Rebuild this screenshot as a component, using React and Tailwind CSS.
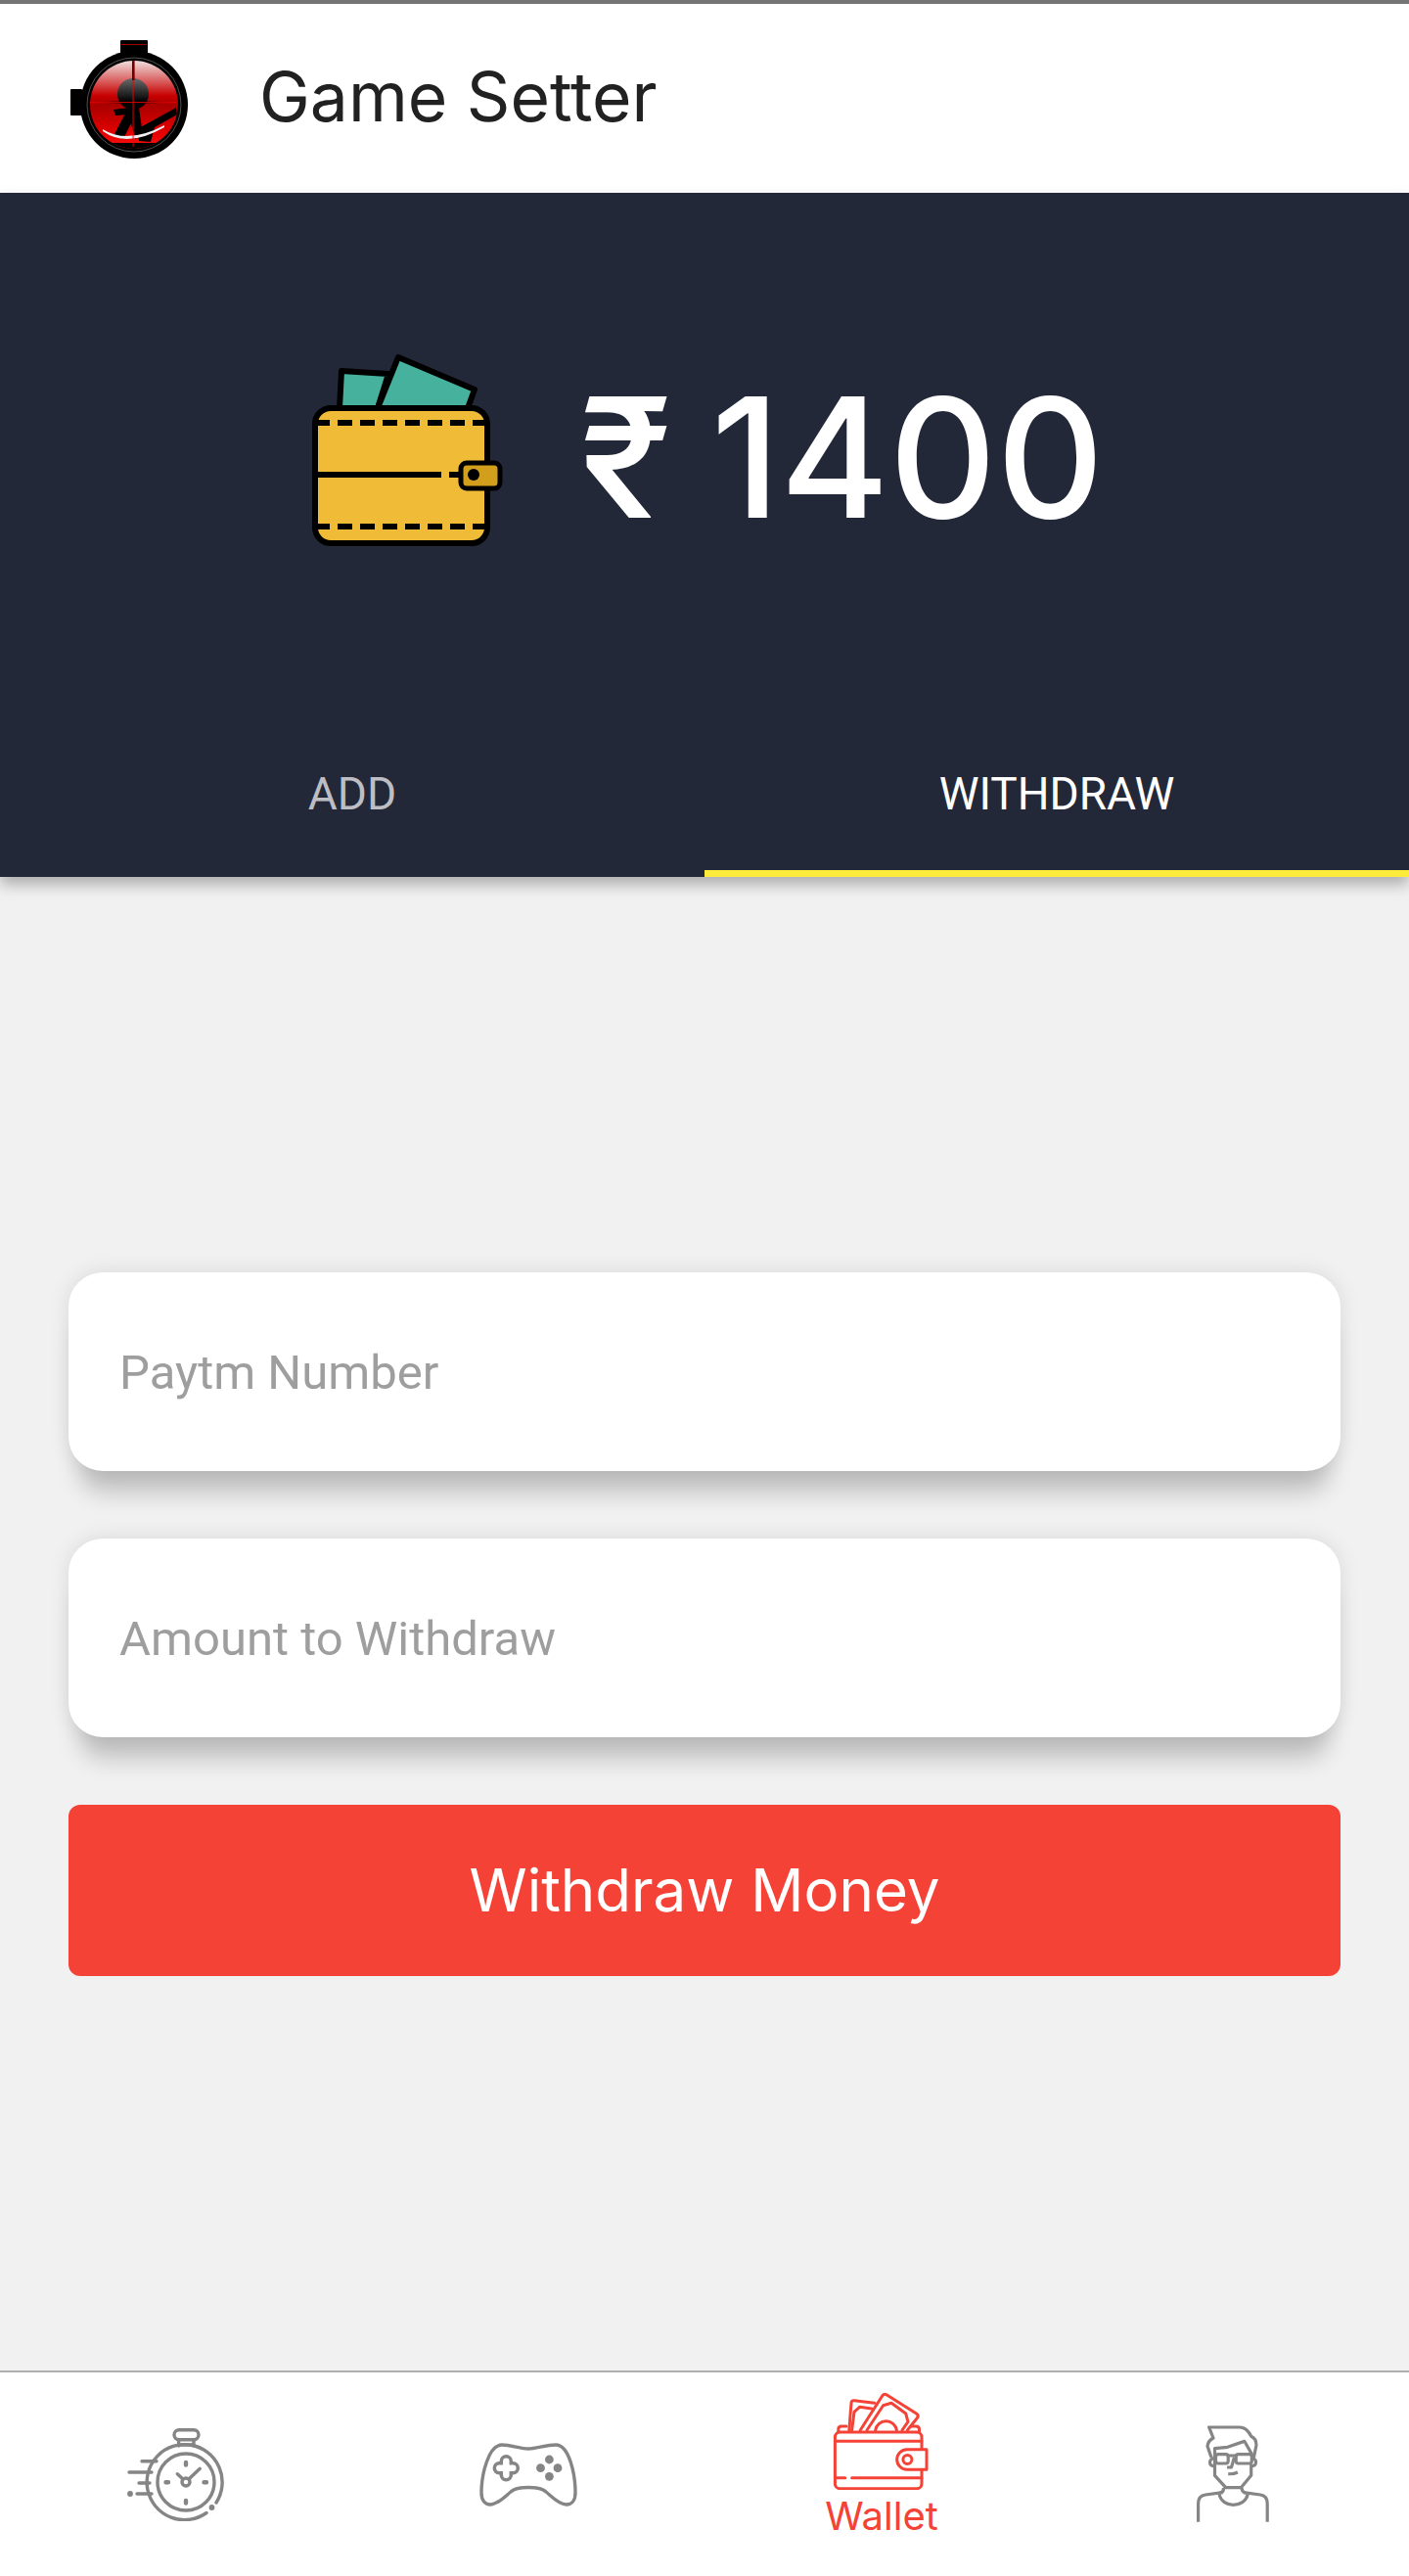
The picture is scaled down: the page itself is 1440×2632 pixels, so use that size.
import { useState } from "react";

function SniperLogo() {
  return (
    <svg viewBox="22 20 124 124" className="w-[124px] h-[124px] shrink-0 mt-[3px]">
      <defs>
        <linearGradient id="glass" x1="0" y1="0" x2="0" y2="1">
          <stop offset="0" stopColor="#f0dede" />
          <stop offset="0.2" stopColor="#dc7070" />
          <stop offset="0.4" stopColor="#c80000" />
          <stop offset="0.5" stopColor="#a80000" />
          <stop offset="0.8" stopColor="#e00000" />
          <stop offset="1" stopColor="#ff1010" />
        </linearGradient>
        <linearGradient id="head" x1="0" y1="0" x2="0" y2="1">
          <stop offset="0" stopColor="#6a6a6a" />
          <stop offset="0.75" stopColor="#000" />
        </linearGradient>
        <clipPath id="lens">
          <circle cx="87" cy="87" r="45" />
        </clipPath>
      </defs>
      <rect x="73" y="21" width="28" height="14" rx="1" fill="#000" />
      <rect x="22" y="71" width="12" height="27" rx="1" fill="#000" />
      <rect x="74" y="25" width="26" height="1" fill="#a00000" />
      <circle cx="87" cy="87" r="55" fill="#000" />
      <circle cx="87" cy="87" r="48" fill="none" stroke="#666" strokeWidth="0.8" />
      <circle cx="87" cy="87" r="45" fill="url(#glass)" />
      <g clipPath="url(#lens)">
        <circle cx="86" cy="76" r="16" fill="url(#head)" />
        <path d="M81 90 L92 90 L96 118 L88 122 L84 106 L76 122 L66 119 Z" fill="#000" />
        <path d="M66 92 L82 90 L82 97 L68 98 Z" fill="#000" />
        <path d="M90 112 L130 90 L131 97 L108 110 L104 125 L92 124 Z" fill="#000" />
        <path d="M55 112 Q80 128 118 108 L118 110 Q80 132 55 114 Z" fill="#f0f0f0" />
        <rect x="40" y="126" width="92" height="10" fill="#000" />
        <rect x="85" y="40" width="2.5" height="22" fill="#000" />
        <path d="M42 84.5 L74 83.5 L74 85.5 Z M130 84.5 L98 83.5 L98 85.5 Z" fill="#000" />
        <rect x="85.6" y="40" width="0.9" height="90" fill="#f00000" />
        <rect x="42" y="84.2" width="88" height="0.9" fill="#f00000" />
      </g>
    </svg>
  );
}

function BigWallet() {
  return (
    <svg viewBox="28 20 198 200" className="w-[198px] h-[200px] shrink-0">
      <g stroke="#000" strokeWidth="6" strokeLinejoin="round">
        <path d="M58 78 L60 40 L108 43 L97 78 Z" fill="#46b29d" />
        <path d="M97 78 L118 26 L196 59 L189 78 Z" fill="#46b29d" />
        <rect x="33" y="78" width="176" height="138" rx="16" fill="#f0bb36" />
      </g>
      <g stroke="#000" strokeWidth="6" fill="none">
        <line x1="33" y1="93" x2="209" y2="93" strokeDasharray="15 8" />
        <line x1="33" y1="199" x2="209" y2="199" strokeDasharray="15 8" />
        <line x1="33" y1="146" x2="162" y2="146" />
        <line x1="170" y1="146" x2="182" y2="146" />
      </g>
      <rect x="182" y="134" width="40" height="26" rx="6" fill="#d19f1c" stroke="#000" strokeWidth="5" />
      <circle cx="195" cy="146" r="6" fill="#000" />
    </svg>
  );
}

function StopwatchIcon() {
  return (
    <svg viewBox="0 0 100 95" fill="none" stroke="#858585" strokeWidth="3.4" strokeLinecap="round" className="w-[100px] h-[95px]">
      <rect x="48" y="1.7" width="25" height="10" rx="5" />
      <path d="M52.6 12 V18 M68 12 V18 M52.6 17 H68" />
      <path d="M91 76 A38.5 38.5 0 1 0 81 86.5" />
      <circle cx="86.5" cy="81" r="1.2" fill="#858585" />
      <circle cx="60" cy="55" r="29" />
      <path d="M15 33.7 H30 M2 45 H25 M12 56 H23 M10 67 H25" />
      <circle cx="3" cy="67" r="1.2" fill="#858585" />
      <path d="M60 35 V37.5 M60 74 V76.5 M39.5 55.3 H42 M78.5 55.3 H81" strokeWidth="4.4" />
      <circle cx="60" cy="55" r="4" />
      <path d="M63 52 L74.3 41.3 M57 52 L51.3 46.7" />
    </svg>
  );
}

function ControllerIcon() {
  return (
    <svg viewBox="0 0 100 67" fill="none" stroke="#858585" strokeWidth="3.4" className="w-[100px] h-[67px]">
      <path d="M23 3 C32 3 42 7 50 7 C58 7 68 3 78 3 C92 3 98 34 98 52 C98 60 94 64 89 64 C81 64 73 55 68 51 C62 45 38 45 32 51 C27 55 19 64 11 64 C6 64 2 60 2 52 C2 34 9 3 23 3 Z" />
      <path d="M20.3 26.7 H34.3 M27.3 19.7 V33.7" strokeWidth="13.5" strokeLinecap="round" />
      <path d="M20.3 26.7 H34.3 M27.3 19.7 V33.7" strokeWidth="6.5" strokeLinecap="round" stroke="#fff" />
      <g fill="#858585" stroke="none">
        <circle cx="71.4" cy="18" r="4.4" />
        <circle cx="62.5" cy="26.7" r="4.4" />
        <circle cx="80" cy="26.7" r="4.4" />
        <circle cx="71.4" cy="35.3" r="4.4" />
      </g>
    </svg>
  );
}

function WalletIcon() {
  return (
    <svg viewBox="0 0 100 101" fill="none" stroke="#f44336" strokeWidth="3" strokeLinecap="round" strokeLinejoin="round" className="w-[100px] h-[101px]">
      <rect x="3.4" y="42" width="88.6" height="57.7" rx="5" />
      <path d="M3.4 51.3 H92 M3.4 88.7 H13.7 M20.6 88.7 H92" />
      <path d="M97 59.7 H77 A10.3 10.3 0 0 0 77 80.3 H97 Z" fill="#fff" />
      <circle cx="77.4" cy="70" r="4.5" />
      <path d="M6.8 42 V39 Q6.8 36 10 36 H15 M81 36 H86 Q89.5 36 89.5 39 V42" />
      <path d="M17.8 40 L20 12 Q20.4 9.6 23 9.8 L43.7 12.3" />
      <path d="M20.6 40 L23 21.3 L28.5 16.3 L40.6 18" />
      <path d="M29.2 40 L52 4.5 Q53.5 2.5 56 3.8 L86.5 23 Q89 24.5 87.8 27 L77.4 40" />
      <path d="M36 40 L52.6 14.7 L61 12.3 L75.7 23 L78 31.3 L72 40" />
      <path d="M44.7 40 A11 11 0 0 1 66.4 40" />
    </svg>
  );
}

function PersonIcon() {
  return (
    <svg viewBox="0 0 76 100" fill="none" stroke="#858585" strokeWidth="3.2" strokeLinejoin="round" className="w-[76px] h-[100px]">
      <path d="M16 33 L12 21.3 Q12.5 16 18 13 L13.6 2 H44.6 Q52 2 56.7 11.3 Q62.5 14 61.8 21 L59.4 33" />
      <path d="M19.5 39 V23.7 L32.6 22.3 L49.8 16.3 L58.4 31.3" />
      <path d="M19.5 39 V51.3 L30.8 63.7 H46.3 L56.7 51.3 V39.7" />
      <rect x="20.5" y="29.7" width="12.7" height="9.3" rx="2.5" />
      <rect x="41.2" y="29.7" width="16.1" height="9.3" rx="2.5" />
      <path d="M33 31 L41 31 M39.4 33 L36.5 43 H32 M33.2 49.7 Q39 50 42.9 48" />
      <path d="M19.5 33 Q13 35 15 40 Q16 42 19.5 41.5 M57.3 33 Q63 35 61 40 Q60 42 56.7 41.5" />
      <path d="M28.4 63.7 Q29 68 25 69 M47 63.7 Q47 68 51 69" />
      <path d="M24 70.3 C27 85 50 85 53.2 70.3" />
      <path d="M2.6 98.7 V80 C2.6 74 6 71.5 10 71 L27.4 68.7 M73.2 98.7 V80 C73.2 74 70 71.5 66 71 L49 68.7" />
    </svg>
  );
}

export default function App() {
  const [tab, setTab] = useState("withdraw");

  return (
    <div className="h-[2632px] flex flex-col bg-[#f1f1f1] font-['Roboto',sans-serif]">
      {/* HEADER */}
      <header className="h-[197px] shrink-0 flex items-center gap-[69px] pl-[72px] bg-white border-t-4 border-[#757575]">
        <SniperLogo />
        <h1 className="font-['Inter',sans-serif] text-[69.5px] leading-none text-[#212121] -mt-[2px]">Game Setter</h1>
      </header>

      {/* BALANCE + TABS */}
      <section className="relative z-10 h-[699px] shrink-0 flex flex-col bg-[#232839] shadow-[0_8px_14px_rgba(0,0,0,0.28)]">
        <div className="flex-1 flex items-center justify-center gap-[78px] pb-[4px] pl-[5px]">
          <BigWallet />
          <p className="font-['Inter',sans-serif] font-medium text-[170px] leading-none text-white pt-[16px] [word-spacing:-5px]">₹ 1400</p>
        </div>
        <div className="grid grid-cols-2 h-[172px] text-[46px]">
          <button
            onClick={() => setTab("add")}
            className={`pt-[10px] border-b-[7px] ${tab === "add" ? "text-white border-[#ffeb3b]" : "text-[#bdbec4] border-transparent"}`}
          >
            ADD
          </button>
          <button
            onClick={() => setTab("withdraw")}
            className={`pt-[10px] border-b-[7px] ${tab === "withdraw" ? "text-white border-[#ffeb3b]" : "text-[#bdbec4] border-transparent"}`}
          >
            WITHDRAW
          </button>
        </div>
      </section>

      {/* FORM */}
      <main className="flex-1 flex flex-col justify-center gap-[69px] px-[70px]">
        <input
          placeholder="Paytm Number"
          className="h-[203px] px-[52px] pt-[3px] rounded-[35px] bg-white text-[49px] placeholder:text-[#9e9e9e] shadow-[0_34px_24px_-12px_rgba(0,0,0,0.2),0_0_22px_rgba(0,0,0,0.1)]"
        />
        <input
          placeholder="Amount to Withdraw"
          className="h-[203px] px-[52px] pt-[3px] rounded-[35px] bg-white text-[49px] placeholder:text-[#9e9e9e] shadow-[0_34px_24px_-12px_rgba(0,0,0,0.2),0_0_22px_rgba(0,0,0,0.1)]"
        />
        <button className="h-[175px] rounded-[12px] bg-[#f44336] text-white text-[60px] font-['Inter',sans-serif]">
          Withdraw Money
        </button>
      </main>

      {/* BOTTOM NAV */}
      <nav className="h-[210px] shrink-0 grid grid-cols-4 bg-white border-t-2 border-[#b0b0b0]">
        <div className="flex items-center justify-center">
          <StopwatchIcon />
        </div>
        <div className="flex items-center justify-center">
          <ControllerIcon />
        </div>
        <div className="flex flex-col items-center pt-[19px]">
          <WalletIcon />
          <span className="font-['Inter',sans-serif] text-[40px] leading-[53px] pl-[2px] text-[#f44336]">Wallet</span>
        </div>
        <div className="flex items-center justify-center">
          <PersonIcon />
        </div>
      </nav>
    </div>
  );
}
